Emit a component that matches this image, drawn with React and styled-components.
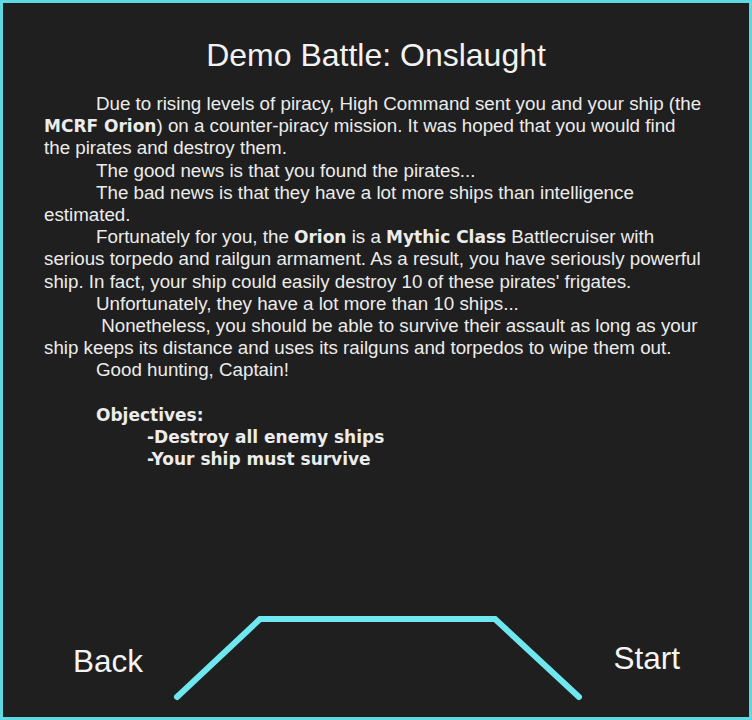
import styled, { createGlobalStyle } from "styled-components";

const GlobalStyle = createGlobalStyle`
  html, body {
    margin: 0;
    padding: 0;
    background: #1f1f1f;
  }
`;

const Frame = styled.div`
  width: 752px;
  height: 720px;
  box-sizing: border-box;
  border: 3px solid #5fd9e1;
  background: #1f1f1f;
  display: flex;
  flex-direction: column;
  font-family: "Liberation Sans", Arial, sans-serif;
  color: #ececec;
`;

const Title = styled.h1`
  margin: 34px 0 0;
  font-size: 32px;
  font-weight: normal;
  text-align: center;
  color: #f2f2f2;
`;

const Briefing = styled.div`
  margin-top: 19px;
  padding: 0 43px 0 41px;
  font-size: 18.75px;
  line-height: 22.2px;
`;

const Para = styled.p`
  margin: 0;
  text-indent: 52px;
  white-space: pre-wrap;
`;

const Strong = styled.b`
  font-family: "DejaVu Sans", sans-serif;
  font-weight: bold;
  font-size: 17px;
`;

const Objectives = styled.div`
  margin-top: 22.2px;
  padding-left: 52px;
  font-family: "DejaVu Sans", sans-serif;
  font-weight: bold;
  font-size: 17px;
`;

const Goal = styled.div`
  padding-left: ${(props) => (props.$sub ? "51px" : "0")};
`;

const BottomBar = styled.div`
  margin-top: auto;
  display: flex;
  align-items: center;
  justify-content: space-between;
  padding: 0 69px 15px 70px;
`;

const NavLabel = styled.div`
  font-size: 31.5px;
  color: #f4f4f4;
  padding-top: ${(props) => props.$drop || 0}px;
  cursor: pointer;
`;

const Trapezoid = styled.svg`
  display: block;
  width: 414px;
  height: 90px;
`;

export default function App() {
  return (
    <>
      <GlobalStyle />
      <Frame>
        <Title>Demo Battle: Onslaught</Title>
        <Briefing>
          <Para>
            Due to rising levels of piracy, High Command sent you and your ship
            (the <Strong>MCRF Orion</Strong>) on a counter-piracy mission. It
            was hoped that you would find the pirates and destroy them.
          </Para>
          <Para>The good news is that you found the pirates...</Para>
          <Para>
            The bad news is that they have a lot more ships than intelligence
            estimated.
          </Para>
          <Para>
            Fortunately for you, the <Strong>Orion</Strong> is a{" "}
            <Strong>Mythic Class</Strong> Battlecruiser with serious torpedo
            and railgun armament. As a result, you have seriously powerful
            ship. In fact, your ship could easily destroy 10 of these pirates'
            frigates.
          </Para>
          <Para>Unfortunately, they have a lot more than 10 ships...</Para>
          <Para>
            {" Nonetheless, you should be able to survive their assault as long as your ship keeps its distance and uses its railguns and torpedos to wipe them out."}
          </Para>
          <Para>Good hunting, Captain!</Para>
          <Objectives>
            <Goal>Objectives:</Goal>
            <Goal $sub>-Destroy all enemy ships</Goal>
            <Goal $sub>-Your ship must survive</Goal>
          </Objectives>
        </Briefing>
        <BottomBar>
          <NavLabel $drop={8}>Back</NavLabel>
          <Trapezoid viewBox="0 0 414 90">
            <polyline
              points="6,85 89,7 324,7 408,85"
              fill="none"
              stroke="#6fe7ef"
              strokeWidth="6"
              strokeLinecap="round"
              strokeLinejoin="miter"
            />
          </Trapezoid>
          <NavLabel $drop={2}>Start</NavLabel>
        </BottomBar>
      </Frame>
    </>
  );
}
